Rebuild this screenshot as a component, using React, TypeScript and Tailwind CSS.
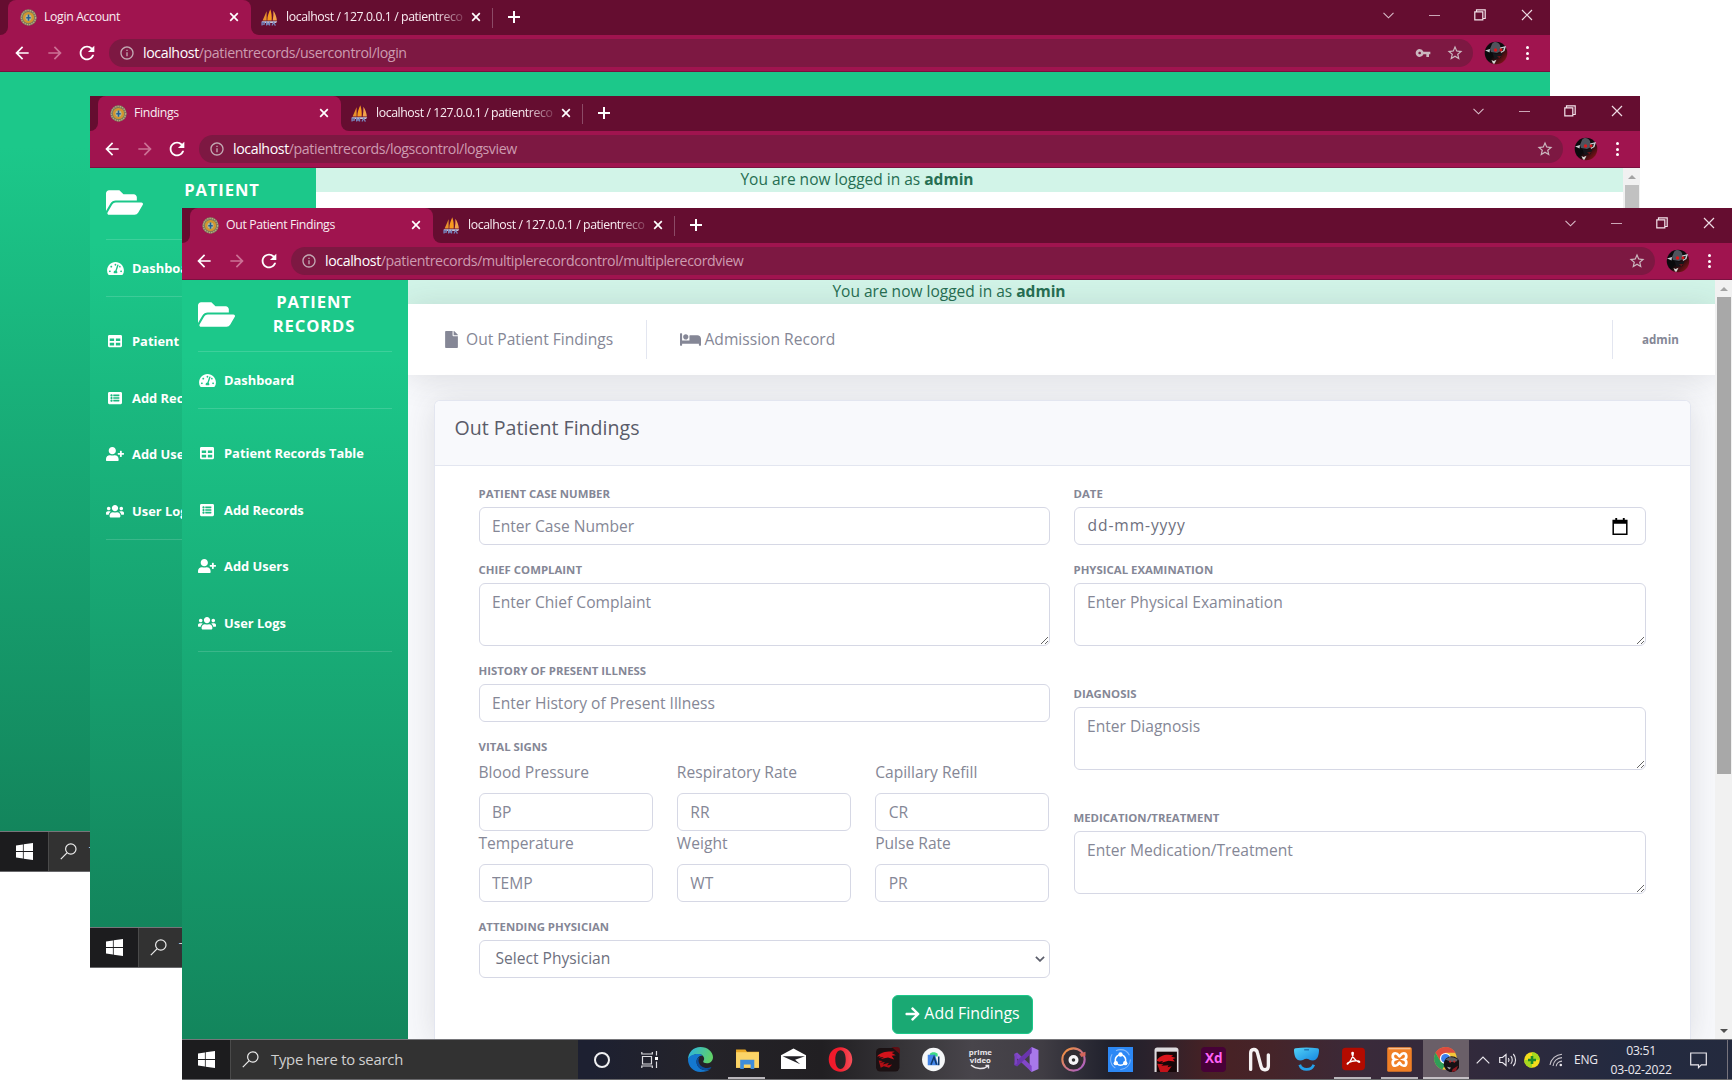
import type { ReactNode } from 'react';
import {
  FaArrowRight,
  FaBed,
  FaFile,
  FaFolderOpen,
  FaListAlt,
  FaTable,
  FaTachometerAlt,
  FaUserPlus,
  FaUsers,
} from 'react-icons/fa';
import { MdArrowBack, MdArrowForward, MdRefresh, MdInfoOutline, MdStarBorder, MdVpnKey } from 'react-icons/md';

/* ---------- Browser chrome ---------- */

function SealIcon() {
  return (
    <svg viewBox="0 0 17 17" className="h-[17px] w-[17px] shrink-0">
      <circle cx="8.5" cy="8.5" r="8.2" fill="#7d7a5c" />
      <circle cx="8.5" cy="8.5" r="7.1" fill="none" stroke="#b7ac83" strokeWidth="1.3" strokeDasharray="1.3 1" />
      <circle cx="8.5" cy="8.5" r="5.6" fill="#d2962f" />
      <circle cx="8.5" cy="8.7" r="3.1" fill="#b3b79a" />
      <path d="M8.5 5.4v6.4M6.3 8.8h4.4" stroke="#1f5f94" strokeWidth="1.5" />
    </svg>
  );
}

function SailIcon() {
  return (
    <svg viewBox="0 0 17 17" className="h-[17px] w-[17px] shrink-0">
      <path d="M5.6 2.2 1.6 11.6h4z" fill="#e8912c" />
      <path d="M9.3.3c-1.600 3.700-3 7.200-3 11.300h4.400C10.900 7.500 10.600 4 9.300.3z" fill="#f79a1f" />
      <path d="M12.400 1.700c2 3 3.200 6.400 3.500 9.900h-4.200c.6-3.400.9-6.700.7-9.900z" fill="#f2a24a" />
      <path d="M.6 12.300h15.600l-1.100 1.600H1.600z" fill="#c7c3d2" />
      <path d="M1 16.600v-3.200h2.300v1.800H1M5.600 16.600v-3.200l1.500 2 1.500-2v3.200M11 16.600l1.600-3.200 1.800 3.200" fill="none" stroke="#7784bb" strokeWidth="1.200" />
    </svg>
  );
}

function CloseIcon() {
  return (
    <svg viewBox="0 0 10 10" className="-mt-px h-[10px] w-[10px] shrink-0">
      <path d="M1.200 1.200l7.600 7.600M8.800 1.200l-7.600 7.600" stroke="#fff" strokeWidth="1.700" />
    </svg>
  );
}

function Avatar() {
  return (
    <svg viewBox="0 0 24 24" className="h-6 w-6 shrink-0">
      <defs>
        <linearGradient id="avatar-glow" x1="0" y1="0" x2="1" y2="1">
          <stop offset="0.5" stopColor="#0a0a0c" />
          <stop offset="1" stopColor="#a3161c" />
        </linearGradient>
      </defs>
      <circle cx="12" cy="12" r="11.300" fill="url(#avatar-glow)" />
      <path d="M8 3c2-3 6-2.500 8 1l1 6-4 2-6-1-1-3z" fill="#50535c" />
      <path d="M1 9.500L6 8l-.5 3.500-2-1zM16 6.500l6-1.500-1.500 5-3.500 2z" fill="#c9ccd3" />
      <path d="M17 7.500l3-.8-1 3-1.700.8z" fill="#1a1b20" />
      <path d="M8.500 12l6 1 4-1-2 5-6 1z" fill="#16161b" />
      <circle cx="11.500" cy="9" r="1.700" fill="#e0181b" />
      <circle cx="17" cy="8.800" r="1.500" fill="#d31518" />
      <path d="M7.500 19l2 1 3-1.200-2 3.900-1.500-.2z" fill="#d5d7d5" />
      <path d="M13 15.500l4-.5-1.500 2z" fill="#7a1115" />
    </svg>
  );
}

function WindowButtons() {
  return (
    <div className="flex h-[30px] items-center pr-[17px]">
      <svg viewBox="0 0 11 7" className="h-[7px] w-[11px]">
        <path d="M.5.8l5 5 5-5" fill="none" stroke="#d9bcc8" strokeWidth="1.100" />
      </svg>
      <div className="ml-[35px] h-px w-[11px] bg-[#cba7b6]" />
      <svg viewBox="0 0 12 12" className="ml-[34px] h-3 w-3">
        <path d="M.8 2.800h8v8h-8zM2.500 2.500V.8h8.700v8.700H9" fill="none" stroke="#f3e3ea" strokeWidth="1.200" />
      </svg>
      <svg viewBox="0 0 12 12" className="ml-[35px] h-3 w-3">
        <path d="M1 1l10 10M11 1L1 11" stroke="#eedbe3" strokeWidth="1.200" />
      </svg>
    </div>
  );
}

type ChromeProps = { title: string; path: string; showKey?: boolean };

function BrowserChrome({ title, path, showKey }: ChromeProps) {
  return (
    <div className="shrink-0 font-['Open_Sans',sans-serif]">
      <div className="flex h-[35px] bg-[#a0144f] text-[12.300px] tracking-[-0.360px] text-[#f9edf2]">
        <div className="w-2 rounded-br-lg bg-[#650d30]" />
        <div className="w-[243px] bg-[#650d30]">
          <div className="flex h-full items-center rounded-t-lg bg-[#a0144f] pr-[12px] pl-[12px]">
            <SealIcon />
            <span className="-mt-px ml-[7px] flex-1 whitespace-nowrap">{title}</span>
            <CloseIcon />
          </div>
        </div>
        <div className="flex flex-1 items-center rounded-bl-lg bg-[#650d30] pl-[10px]">
          <SailIcon />
          <span className="-mt-px ml-[8px] w-[178px] shrink-0 tracking-[-0.420px] whitespace-nowrap [mask-image:linear-gradient(to_right,#000_150px,transparent_184px)]">
            localhost / 127.0.0.1 / patientreco
          </span>
          <span className="ml-[7px] flex">
            <CloseIcon />
          </span>
          <div className="ml-[11px] h-5 w-px bg-[#8c4a66]" />
          <svg viewBox="0 0 12 12" className="-mt-px ml-[15px] h-3 w-3">
            <path d="M6 0v12M0 6h12" stroke="#fff" strokeWidth="2" />
          </svg>
          <div className="flex-1 self-start">
            <div className="flex justify-end">
              <WindowButtons />
            </div>
          </div>
        </div>
      </div>
      <div className="flex h-9 items-center bg-[#a0144f]">
        <MdArrowBack className="ml-[12px] h-[20px] w-[20px] text-white" />
        <MdArrowForward className="ml-[13px] h-[20px] w-[20px] text-[#cc7195]" />
        <MdRefresh className="ml-[11px] h-[22px] w-[22px] text-white" />
        <div className="ml-[11px] flex h-7 flex-1 items-center rounded-full bg-[#7d1842] pr-[9px] pl-[10px]">
          <MdInfoOutline className="h-4 w-4 text-[#c3a9b3]" />
          <span className="-mt-px ml-[8px] text-[14.200px] tracking-[-0.405px] whitespace-nowrap text-[#cd9bb0]">
            <span className="text-white">localhost</span>
            {path}
          </span>
          <span className="flex-1" />
          {showKey && <MdVpnKey className="mr-[15px] h-4 w-4 text-[#cbb8bf]" />}
          <MdStarBorder className="h-[18px] w-[18px] text-[#cbb8bf]" />
        </div>
        <div className="ml-[11px]">
          <Avatar />
        </div>
        <div className="mr-[21px] ml-[18px] flex flex-col gap-[2.500px]">
          <span className="h-[3px] w-[3px] rounded-full bg-white" />
          <span className="h-[3px] w-[3px] rounded-full bg-white" />
          <span className="h-[3px] w-[3px] rounded-full bg-white" />
        </div>
      </div>
      <div className="h-px bg-[#7a1140]" />
    </div>
  );
}

/* ---------- Taskbar ---------- */

function TaskCell({ children, open, active }: { children: ReactNode; open?: boolean; active?: boolean }) {
  return (
    <div className={active ? 'flex w-[46.600px] shrink-0 flex-col items-center bg-[#6a5f68]' : 'flex w-[46.600px] shrink-0 flex-col items-center'}>
      <div className="flex flex-1 items-center pt-[2px] pl-[1px]">{children}</div>
      <div className={active ? 'h-[2px] w-full bg-[#c5c0c5]' : open ? 'h-[2px] w-[37px] bg-[#b9b6bb]' : 'h-[2px] w-[37px]'} />
    </div>
  );
}

function Glyph({ children }: { children: ReactNode }) {
  return (
    <svg viewBox="0 0 24 24" className="h-[25px] w-[25px]">
      {children}
    </svg>
  );
}

function PinnedApps() {
  return (
    <>
      <TaskCell>
        <Glyph>
          <defs>
            <linearGradient id="edge-sea" x1="0" y1="0" x2="1" y2="0.300">
              <stop offset="0" stopColor="#29b3e8" />
              <stop offset="1" stopColor="#5fd06a" />
            </linearGradient>
          </defs>
          <path d="M12 0c7 0 12 4.800 12 9.800 0 3.600-2.800 5.900-6 5.900-2.200 0-3.400-.9-3.400-1.700 0-.6.9-1.200.9-2.700 0-2.300-2.300-4.500-5.700-4.500C5.500 6.800 1.400 9.400 0 12 .2 5.200 5.200 0 12 0z" fill="url(#edge-sea)" />
          <path d="M0 12c.8-3 4.300-5.200 9.800-5.200 1.700 0 3 .5 4 1.300-3.500.2-5.600 3-5.600 6 0 4.500 4 8.200 8.700 8.200 1.800 0 3.500-.6 4.900-1.500C19.600 22.900 16 24 12 24 5 24 0 18.500 0 12z" fill="#1478cf" />
          <path d="M8.200 14.100c0 4.900 4.400 8.100 8.700 8.100 2.100 0 3.900-.7 5.300-2 .4-.4 0-.9-.5-.7-4.700 1.800-10.600-.2-11.500-5.600-.2-1.500.2-3 1.100-4.200-1.900.7-3.100 2.400-3.100 4.400z" fill="#0c4f9e" />
        </Glyph>
      </TaskCell>
      <TaskCell open>
        <Glyph>
          <path d="M1 2.500h9l1.500 2H23V20H1z" fill="#e9a825" />
          <path d="M1 5h22v15H1z" fill="#fbd467" />
          <path d="M5 21v-8.800h13.500V21H15v-4.300H8.500V21z" fill="#3e8ddb" />
        </Glyph>
      </TaskCell>
      <TaskCell>
        <Glyph>
          <path d="M0 8l12-6.500L24 8v13H0z" fill="#fff" />
          <path d="M1.500 8.800h21.500l-9.500 3.500 5 4.200z" fill="#222126" />
        </Glyph>
      </TaskCell>
      <TaskCell>
        <Glyph>
          <defs>
            <linearGradient id="opera-ring" x1="0" y1="0" x2="1" y2="0">
              <stop offset="0.400" stopColor="#f01a2b" />
              <stop offset="1" stopColor="#f5505a" />
            </linearGradient>
          </defs>
          <path fillRule="evenodd" d="M12 .3c6.400 0 11.300 5 11.300 11.700S18.400 23.700 12 23.700.7 18.700.7 12 5.600.3 12 .3zM12 3c-3.200 0-5 4-5 9s1.800 9 5 9 5-4 5-9-1.800-9-5-9z" fill="url(#opera-ring)" />
        </Glyph>
      </TaskCell>
      <TaskCell>
        <Glyph>
          <rect x="1" y="1" width="22.500" height="22.500" rx="4" fill="#1b1113" />
          <path d="M16 0h5a3 3 0 0 1 3 3v4z" fill="#5f0e14" />
          <path d="M2 9c4-4 9-5 17-4.500l-3 1.300 4 2-4 .7 2.500 3.500-6-2-7 1.500 3-1.800-5 .3 2-1.300z" fill="#d3131b" />
          <path d="M3.500 13l4 .5-3 1.500 5-.5-2 2.200 6-1.500-2 2.600 5-1-3 3-5-1.300-3 1.500z" fill="#b30f16" />
        </Glyph>
      </TaskCell>
      <TaskCell>
        <Glyph>
          <ellipse cx="12" cy="12" rx="11" ry="11.300" fill="#f5f7f8" />
          <path d="M8.500 6.500c1-2 6-2 7.500 0V9H8.500z" fill="#3ddc84" />
          <path d="M6.500 7.500h7l3 10h-10z" fill="#4285e8" />
          <path d="M9.500 17l3-7.500 2.500 7.500M17 9v8.500" fill="none" stroke="#123a6b" strokeWidth="1.500" />
        </Glyph>
      </TaskCell>
      <TaskCell>
        <div className="flex flex-col items-center font-['Open_Sans',sans-serif] text-[7.800px] leading-[7.500px] font-bold text-[#e9e6ea]">
          <span>prime</span>
          <span>video</span>
          <svg viewBox="0 0 20 6" className="h-[6px] w-5">
            <path d="M1 1c5 4.500 13 4.500 17 1M15.500 1.500h3v3" fill="none" stroke="#e9e6ea" strokeWidth="1.400" />
          </svg>
        </div>
      </TaskCell>
      <TaskCell>
        <Glyph>
          <path d="M17 0l6.500 2.800v18.400L17 24l-2-2V2z" fill="#a878ea" />
          <path d="M.5 6.500L3 5.300l14 12.900V24L.5 8.700z" fill="#8247c8" />
          <path d="M.5 17.500L3 18.700 17 5.800V0L.5 15.300z" fill="#6a35ae" />
          <path d="M.5 6.500L3 8v8l-2.500 1.500z" fill="#7a42bf" />
        </Glyph>
      </TaskCell>
      <TaskCell>
        <Glyph>
          <defs>
            <linearGradient id="groove-ring" x1="0" y1="0" x2="1" y2="1">
              <stop offset="0" stopColor="#f79434" />
              <stop offset="1" stopColor="#a45ad0" />
            </linearGradient>
          </defs>
          <circle cx="12" cy="12" r="10.700" fill="#312d33" stroke="url(#groove-ring)" strokeWidth="2" />
          <circle cx="12" cy="12.500" r="4.800" fill="#f7f5f7" />
          <circle cx="12" cy="12.500" r="1.700" fill="#333" />
          <path d="M17.500 6.500l6-2v4l-4 1z" fill="#d3655c" />
        </Glyph>
      </TaskCell>
      <TaskCell>
        <Glyph>
          <rect width="24" height="24" fill="#2c88f5" />
          <circle cx="12" cy="12" r="9.500" fill="none" stroke="#85b9fa" strokeWidth="1" strokeDasharray="15 5" />
          <circle cx="12" cy="12.500" r="5" fill="none" stroke="#fff" strokeWidth="1.500" />
          <circle cx="12" cy="7.200" r="2.100" fill="#fff" />
          <circle cx="7.500" cy="15.500" r="2.100" fill="#fff" />
          <circle cx="16.500" cy="15.500" r="2.100" fill="#fff" />
        </Glyph>
      </TaskCell>
      <TaskCell>
        <Glyph>
          <path d="M.5 3c0-1.500 1-2.500 2.500-2.500h18c1.500 0 2.500 1 2.500 2.500v21H.5z" fill="#dddadd" />
          <rect x="2.500" y="4.500" width="19.500" height="19.500" fill="#160709" />
          <path d="M2.500 13c3-5 9-6.500 16-5l-2 1.200 4.500 1.300-3 1 2 2.500-6-.8-7 2 2-2-4 1z" fill="#dc151c" />
          <path d="M3 16l6 .5-2 1.500 7-.5-1 2 4-1-4 5.500H6z" fill="#c41219" />
        </Glyph>
      </TaskCell>
      <TaskCell>
        <div className="ml-px flex h-[25px] w-[25px] items-center justify-center rounded-[4px] bg-[#470137] pb-[1px] font-['Open_Sans',sans-serif] text-[13.500px] leading-none font-bold text-[#ff61f6]">
          Xd
        </div>
      </TaskCell>
      <TaskCell>
        <Glyph>
          <path d="M3.500 21.500V6C3.500 1.500 9 1 10 5.500l3.500 13.200c1 4.500 7 4 7-.5V7.500" fill="none" stroke="#f5f2f3" strokeWidth="3.200" strokeLinecap="round" />
        </Glyph>
      </TaskCell>
      <TaskCell>
        <Glyph>
          <defs>
            <linearGradient id="visor" x1="0" y1="0" x2="1" y2="1">
              <stop offset="0" stopColor="#52d2f7" />
              <stop offset="1" stopColor="#1687e0" />
            </linearGradient>
          </defs>
          <path d="M1.500 1.200c7-1 14-1 21 0 1.300.3 1.500 1 1.500 2.500-.2 5.300-2 9.300-6 9.300-2.800 0-3.500-1.800-6-1.800S8.800 13 6 13C2 13 .2 9 0 3.700 0 2.200.2 1.500 1.500 1.200z" fill="url(#visor)" />
          <path d="M9.800 2.700h4.600" stroke="#1c6dae" strokeWidth="1.200" />
          <path d="M5.500 17c2 6 11 6 13.500 0" fill="none" stroke="#25a0ea" strokeWidth="2.600" />
        </Glyph>
      </TaskCell>
      <TaskCell open>
        <Glyph>
          <rect x="1" y=".8" width="22" height="21.500" rx="3.500" fill="#b30b00" />
          <path d="M6.500 16.200c2-1.500 5.300-7 5.300-10.200 0-1.200-1.500-1.200-1.300.3.300 3.200 3.500 7 6.500 8.200 1.300.5 1.200-1-.3-1.200-3.500-.4-7 .3-9.700 1.600-1.300.7-1.300 1.900-.5 1.300z" fill="none" stroke="#fff" strokeWidth="1.300" />
        </Glyph>
      </TaskCell>
      <TaskCell open>
        <Glyph>
          <rect x=".2" y=".2" width="23.600" height="23.600" rx="1.500" fill="#f07f25" />
          <path d="M1.500 1.500h21" stroke="#f9bf8f" strokeWidth="1.500" />
          <path d="M8 6c3 0 3 3 4 3s1-3 4-3 3.500 5 .5 6c3 1 2.500 6-.5 6s-3-3-4-3-1 3-4 3-3.500-5-.5-6C4.500 11 5 6 8 6z" fill="none" stroke="#fff" strokeWidth="2.600" />
        </Glyph>
      </TaskCell>
      <TaskCell active>
        <Glyph>
          <circle cx="11" cy="11" r="10.800" fill="#f3c63a" />
          <path d="M11 0a11 11 0 0 1 9.600 5.500H11L6.200 13.800 1.500 5.600A11 11 0 0 1 11 0z" fill="#dd4b3e" />
          <path d="M1.500 5.600l4.800 8.200L11 16.500l-3 5.100A11 11 0 0 1 1.500 5.600z" fill="#2f9e58" />
          <circle cx="11" cy="11" r="5.300" fill="#fff" />
          <circle cx="11" cy="11" r="4.200" fill="#3a80ee" />
          <circle cx="17" cy="16.500" r="7.700" fill="#151014" />
          <path d="M11 12l4-2.500 4 .5 4 2-1.500 2-5 .5z" fill="#5b5d65" />
          <path d="M18 21l5-3-2 5-4 1z" fill="#8d1820" />
          <path d="M12.500 19l4 1-2 1.500z" fill="#a6a8ac" />
          <circle cx="15.500" cy="14" r="1.100" fill="#c0282b" />
          <circle cx="19.500" cy="14" r="1.100" fill="#c0282b" />
        </Glyph>
      </TaskCell>
    </>
  );
}

function SystemTray() {
  return (
    <div className="flex flex-1 items-center pt-px font-['Open_Sans',sans-serif] text-[#ebe8ee]">
      <svg viewBox="0 0 14 8" className="ml-[7px] h-2 w-[14px]">
        <path d="M.7 7.300L7 1l6.300 6.300" fill="none" stroke="currentColor" strokeWidth="1.200" />
      </svg>
      <svg viewBox="0 0 18 14" className="ml-[9px] h-[14px] w-[18px]">
        <path d="M.7 4.500h2.800L7 1.500v11L3.500 9.500H.7z" fill="none" stroke="currentColor" strokeWidth="1.200" />
        <path d="M9.300 5.200c.8 1 .8 2.600 0 3.600M11.800 3.200c1.900 2 1.900 5.600 0 7.600M14.300 1c3 3.200 3 8.800 0 12" fill="none" stroke="currentColor" strokeWidth="1.100" />
      </svg>
      <svg viewBox="0 0 16 16" className="ml-[7px] h-4 w-4">
        <circle cx="8" cy="8" r="7.800" fill="#f4dd1c" />
        <path d="M8 .2a7.800 7.800 0 0 1 7.800 7.800H11L8 5zM8 15.800A7.800 7.800 0 0 1 .2 8H5l3 3z" fill="#a5d91f" />
        <path d="M8 4v8M4 8h8" stroke="#1d8a28" strokeWidth="2.600" />
      </svg>
      <svg viewBox="0 0 14 14" className="ml-[9px] h-[14px] w-[14px]">
        <path d="M1 12C2 6 7 1.500 13 1.200M4 13c.5-4.500 4-8 9-8.400M7.200 13.300c.3-2.700 2.700-5 5.800-5.200" fill="none" stroke="#c9c5cc" strokeWidth="1.100" />
        <circle cx="11.800" cy="12" r="1.300" fill="currentColor" />
      </svg>
      <span className="ml-[11px] w-6 text-[12px] tracking-[-0.3px]">ENG</span>
      <div className="ml-[6px] w-[74px] text-center text-[12.200px] leading-[19px] tracking-[-0.250px] whitespace-nowrap">
        <p>03:51</p>
        <p>03-02-2022</p>
      </div>
      <svg viewBox="0 0 17 17" className="ml-[12px] h-[17px] w-[17px]">
        <path d="M.7 1h15.600v11.800h-5L8.500 15.600v-2.800H.7z" fill="none" stroke="currentColor" strokeWidth="1.200" />
      </svg>
      <span className="flex-1" />
      <div className="mr-[4px] h-[41px] w-px bg-[#77747d]" />
    </div>
  );
}

function Taskbar() {
  return (
    <div className="flex h-[41px] shrink-0 border-t border-b border-t-[#76767a] border-b-[#68686b] bg-[linear-gradient(90deg,#1d2031_0px,#1d2031_410px,#242329_520px,#211f22_640px,#3b393d_740px,#48454b_790px,#403d44_860px,#1f202c_930px,#2b222c_970px,#482124_1030px,#452429_1090px,#3a2a3a_1180px,#312a3c_1300px,#232a40_1440px,#242a3e_1550px)]">
      <div className="flex w-[48px] shrink-0 items-center justify-center bg-[#1c1c1e]">
        <svg viewBox="0 0 17 17" className="h-[17px] w-[17px]">
          <path d="M0 2.400L6.900 1.400v6.700H0zM7.700 1.300L17 0v8.100H7.700zM0 8.900h6.900v6.700L0 14.600zM7.700 8.900H17V17l-9.300-1.300z" fill="#fff" />
        </svg>
      </div>
      <div className="flex w-[348px] shrink-0 items-center border-l border-[#4a4a4a] bg-[#323232]">
        <svg viewBox="0 0 17 17" className="ml-[11px] h-[17px] w-[17px]">
          <circle cx="10.800" cy="6" r="5.200" fill="none" stroke="#ececec" strokeWidth="1.200" />
          <path d="M7 9.800L.8 16.200" stroke="#ececec" strokeWidth="1.200" />
        </svg>
        <span className="ml-[12px] font-['Open_Sans',sans-serif] text-[14.800px] tracking-[-0.220px] text-[#d0d0d0]">
          Type here to search
        </span>
      </div>
      <div className="flex w-[48px] shrink-0 items-center justify-center">
        <div className="h-[16px] w-[16px] rounded-full border-2 border-[#f0f0f2]" />
      </div>
      <div className="mr-[3px] flex w-[48px] shrink-0 items-center justify-center">
        <svg viewBox="0 0 18 18" className="h-[18px] w-[18px]">
          <path d="M1.500 5.500h9v7.500h-9zM.8 1v2h10.500V1M.8 17v-2h10.500v2M15.500 0v4.500M15.500 10.500V17" fill="none" stroke="#dedee2" strokeWidth="1.200" />
          <path d="M14 6h3v3h-3z" fill="#fff" />
        </svg>
      </div>
      <PinnedApps />
      <SystemTray />
    </div>
  );
}

/* ---------- Patient records application ---------- */

const navItems = [
  { label: 'Patient Records Table', icon: <FaTable className="h-[14px] w-[14px]" /> },
  { label: 'Add Records', icon: <FaListAlt className="h-[14px] w-[14px]" /> },
  { label: 'Add Users', icon: <FaUserPlus className="h-[14.500px] w-[18px]" /> },
  { label: 'User Logs', icon: <FaUsers className="h-[14.500px] w-[18px]" /> },
];

function NavItem({ icon, label }: { icon: ReactNode; label: string }) {
  return (
    <div className="flex items-center text-[12.900px] leading-5 font-bold whitespace-nowrap text-white">
      <span className="flex w-[18px] justify-center">{icon}</span>
      <span className="ml-[8px]">{label}</span>
    </div>
  );
}

function Sidebar() {
  return (
    <aside className="flex w-[226px] shrink-0 flex-col bg-[linear-gradient(180deg,#1cc88a_10%,#13855c_100%)] px-4 text-white">
      <div className="flex h-[71px] shrink-0 items-center pb-[3px]">
        <FaFolderOpen className="h-[33px] w-[37px]" />
        <div className="ml-[28px] flex-1 pr-[27px] text-center text-[16.600px] leading-6 font-bold tracking-[0.900px]">
          <p>PATIENT</p>
          <p>RECORDS</p>
        </div>
      </div>
      <div className="h-px shrink-0 bg-white/15" />
      <div className="flex h-[56px] items-center">
        <NavItem icon={<FaTachometerAlt className="h-[15px] w-[17px]" />} label="Dashboard" />
      </div>
      <div className="h-px shrink-0 bg-white/15" />
      <nav className="mt-[34px] flex flex-col gap-[36.600px]">
        {navItems.map((item) => (
          <NavItem key={item.label} {...item} />
        ))}
      </nav>
      <div className="mt-[18px] h-px shrink-0 bg-white/15" />
    </aside>
  );
}

function ScrollBar({ thumb }: { thumb: string }) {
  return (
    <div className="flex w-[17px] shrink-0 flex-col items-center bg-[#f1f1f1]">
      <svg viewBox="0 0 8 4" className="my-[6.500px] h-1 w-2 shrink-0">
        <path d="M0 4l4-4 4 4z" fill="#a3a3a3" />
      </svg>
      <div className={thumb} />
      <svg viewBox="0 0 8 4" className="mt-auto mb-[6px] h-1 w-2 shrink-0">
        <path d="M0 0l4 4 4-4z" fill="#505050" />
      </svg>
    </div>
  );
}

const controlClass =
  'block w-full rounded-[6px] border border-[#d6d8e5] bg-white px-[12.500px] text-[15.600px] text-[#6e707e] placeholder:text-[#858796] placeholder:opacity-100';

function FieldLabel({ children }: { children: ReactNode }) {
  return (
    <label className="mb-[5px] block h-4 text-[11.400px] leading-4 font-bold whitespace-nowrap text-[#858796]">{children}</label>
  );
}

function InputField({ label, placeholder }: { label: string; placeholder: string }) {
  return (
    <div>
      <FieldLabel>{label}</FieldLabel>
      <input className={`${controlClass} h-[38px]`} placeholder={placeholder} />
    </div>
  );
}

function AreaField({ label, placeholder }: { label: string; placeholder: string }) {
  return (
    <div>
      <FieldLabel>{label}</FieldLabel>
      <textarea className={`${controlClass} h-[62.500px] resize py-[6px] leading-6`} placeholder={placeholder} />
    </div>
  );
}

const vitals = [
  ['Blood Pressure', 'BP'],
  ['Respiratory Rate', 'RR'],
  ['Capillary Refill', 'CR'],
  ['Temperature', 'TEMP'],
  ['Weight', 'WT'],
  ['Pulse Rate', 'PR'],
];

function FindingsForm() {
  return (
    <form className="px-[44px] pt-[20px]">
      <div className="grid grid-cols-[571px_1fr] gap-[24px]">
        <div className="flex flex-col gap-[17px]">
          <InputField label="PATIENT CASE NUMBER" placeholder="Enter Case Number" />
          <AreaField label="CHIEF COMPLAINT" placeholder="Enter Chief Complaint" />
          <InputField label="HISTORY OF PRESENT ILLNESS" placeholder="Enter History of Present Illness" />
          <div>
            <FieldLabel>VITAL SIGNS</FieldLabel>
            <div className="grid grid-cols-3 gap-x-[24px]">
              {vitals.map(([name, short]) => (
                <div key={name}>
                  <p className="mb-[9px] h-6 text-[15.600px] leading-6 text-[#858796]">{name}</p>
                  <input className={`${controlClass} h-[38px]`} placeholder={short} />
                </div>
              ))}
            </div>
          </div>
          <div>
            <FieldLabel>ATTENDING PHYSICIAN</FieldLabel>
            <div className={`${controlClass} flex h-[38px] items-center justify-between pr-[4px] pl-[16px]`}>
              <span>Select Physician</span>
              <svg viewBox="0 0 10 6" className="h-[6px] w-[10px]">
                <path d="M.9.8L5 4.900 9.100.8" fill="none" stroke="#5c5e6b" strokeWidth="1.700" />
              </svg>
            </div>
          </div>
        </div>
        <div className="flex flex-col">
          <div>
            <FieldLabel>DATE</FieldLabel>
            <div className={`${controlClass} flex h-[38px] items-center justify-between pl-[13px] pr-[17px]`}>
              <span className="tracking-[0.900px]">dd-mm-yyyy</span>
              <svg viewBox="0 0 16 18" className="h-[17px] w-[16px]">
                <path d="M3 0h2v1.800h6V0h2v1.800h3V18H0V1.800h3zM1.600 6v10.400h12.800V6z" fillRule="evenodd" fill="#000" />
              </svg>
            </div>
          </div>
          <div className="mt-[17px]">
            <AreaField label="PHYSICAL EXAMINATION" placeholder="Enter Physical Examination" />
          </div>
          <div className="mt-[40.500px]">
            <AreaField label="DIAGNOSIS" placeholder="Enter Diagnosis" />
          </div>
          <div className="mt-[40.500px]">
            <AreaField label="MEDICATION/TREATMENT" placeholder="Enter Medication/Treatment" />
          </div>
        </div>
      </div>
      <button
        type="button"
        className="mt-[17px] ml-[413.500px] flex h-[39px] w-[141px] items-center justify-center gap-[4px] rounded-[6px] border border-[#1cc88a] bg-[#1aa973] text-[15.900px] whitespace-nowrap text-white"
      >
        <FaArrowRight className="h-[16px] w-[15px]" />
        Add Findings
      </button>
    </form>
  );
}

function LoginBanner() {
  return (
    <div className="h-6 shrink-0 bg-[#d2f4e8] pr-[225px] text-center text-[15.500px] leading-[23px] text-[#266e52]">
      You are now logged in as <span className="font-bold">admin</span>
    </div>
  );
}

function FindingsPage() {
  return (
    <div className="flex min-w-0 flex-1 flex-col overflow-hidden bg-[#f8f9fc]">
      <LoginBanner />
      <header className="flex h-[71px] shrink-0 items-center bg-white text-[15.600px] text-[#858796] shadow-[0_3px_32px_0_rgba(58,59,69,0.15)]">
        <FaFile className="ml-[37px] h-[17px] w-[13px]" />
        <span className="ml-[8px] w-[147.500px] whitespace-nowrap">Out Patient Findings</span>
        <div className="ml-[32px] h-[39px] w-px bg-[#e3e6f0]" />
        <FaBed className="ml-[33px] h-[17px] w-[21px]" />
        <span className="ml-[4px] whitespace-nowrap">Admission Record</span>
        <span className="flex-1" />
        <div className="h-[39px] w-px bg-[#e3e6f0]" />
        <span className="mr-[35.500px] ml-[29px] w-[37.500px] text-[11.600px] font-bold">admin</span>
      </header>
      <section className="mt-[25px] mr-[24px] ml-[25.500px] flex-1 rounded-t-[6px] border border-b-0 border-[#e3e6f0] bg-white shadow-[0_3px_32px_0_rgba(58,59,69,0.15)]">
        <div className="h-[65px] rounded-t-[5px] border-b border-[#e3e6f0] bg-[#f8f9fc] pt-[12px] pl-[20px]">
          <h1 className="text-[19.600px] leading-[30px] text-[#5a5c69]">Out Patient Findings</h1>
        </div>
        <FindingsForm />
      </section>
    </div>
  );
}

/* ---------- Desktop ---------- */

function BrowserWindow({ place, children, ...chrome }: ChromeProps & { place: string; children: ReactNode }) {
  return (
    <div className={`absolute flex h-[872px] w-[1550px] flex-col overflow-hidden ${place}`}>
      <BrowserChrome {...chrome} />
      <div className="flex h-[759px] shrink-0 overflow-hidden font-['Open_Sans',sans-serif]">{children}</div>
      <Taskbar />
    </div>
  );
}

export default function App() {
  return (
    <div className="relative h-[1080px] w-[1732px] overflow-hidden bg-white">
      <BrowserWindow place="top-0 left-0" title="Login Account" path="/patientrecords/usercontrol/login" showKey>
        <div className="flex-1 bg-[linear-gradient(180deg,#1cc88a_10%,#13855c_100%)]" />
      </BrowserWindow>
      <BrowserWindow place="top-[96px] left-[90px]" title="Findings" path="/patientrecords/logscontrol/logsview">
        <Sidebar />
        <div className="flex-1 bg-white">
          <LoginBanner />
        </div>
        <ScrollBar thumb="h-[600px] w-[14px] bg-[#c1c1c1]" />
      </BrowserWindow>
      <BrowserWindow
        place="top-[208px] left-[182px]"
        title="Out Patient Findings"
        path="/patientrecords/multiplerecordcontrol/multiplerecordview"
      >
        <Sidebar />
        <FindingsPage />
        <ScrollBar thumb="h-[477px] w-[14px] bg-[#a8a8a8]" />
      </BrowserWindow>
    </div>
  );
}
